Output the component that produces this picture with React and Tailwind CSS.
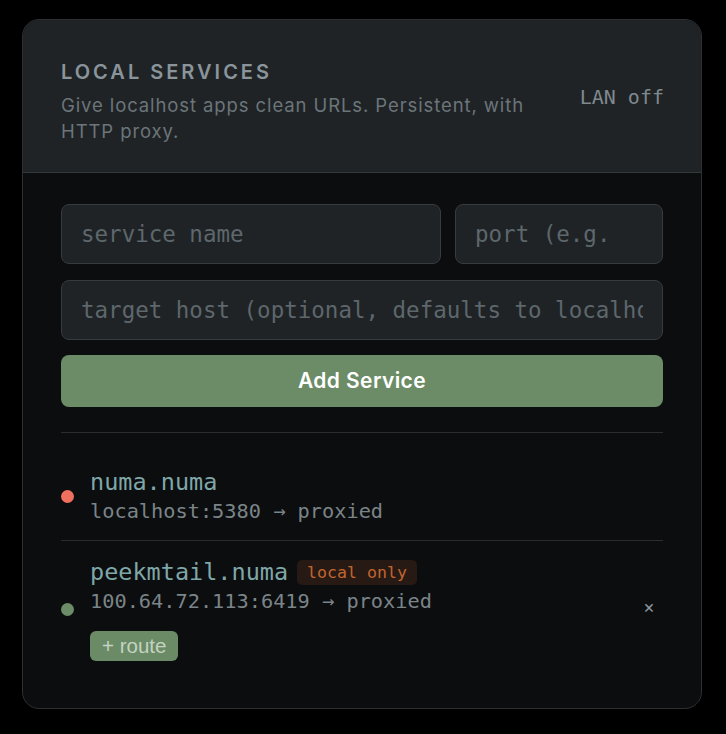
import React from "react";

const mono = "font-['DejaVu_Sans_Mono',monospace]";
const sans = "font-['Inter',sans-serif]";
const inputCls = `${mono} h-[60px] min-w-0 rounded-[8px] border border-[#363b3f] bg-[#1f2326] px-[19px] text-[22.5px] text-[#9aa3a8] outline-none placeholder:text-[#5d676c]`;

export default function App() {
  return (
    <div className="min-h-[734px] w-full bg-black pt-[19px] pl-[22px] pr-[24px] pb-[25px]">
      <div className="w-[680px] overflow-hidden rounded-[17px] border border-[#2c3033] bg-[#0b0d0f]">
        <div className="flex items-center justify-between gap-10 border-b border-[#33383b] bg-[#1f2326] pl-[38px] pr-[37px] pt-[40px] pb-[28px]">
          <div className="flex-1">
            <div className={`${sans} text-[20px] font-semibold leading-[24px] tracking-[0.15em] text-[#8a959b]`}>
              LOCAL SERVICES
            </div>
            <div className={`${sans} mt-[8px] max-w-[480px] text-[18.5px] leading-[26px] tracking-[0.9px] text-[#6b757a]`}>
              Give localhost apps clean URLs. Persistent, with HTTP proxy.
            </div>
          </div>
          <div className={`${mono} mb-[10px] text-[20px] text-[#7f898e] whitespace-nowrap`}>LAN off</div>
        </div>

        <div className="px-[38px] pt-[31px] pb-[47px]">
          <div className="flex gap-[14px]">
            <input className={`${inputCls} w-[380px]`} placeholder="service name" />
            <input className={`${inputCls} flex-1`} placeholder="port (e.g." />
          </div>
          <input
            className={`${inputCls} mt-[16px] block w-full`}
            placeholder="target host (optional, defaults to localhost)"
          />
          <div className={`${sans} mt-[15px] flex h-[52px] items-center justify-center rounded-[8px] bg-[#6b8c66] text-[21px] font-semibold tracking-[0.4px] text-white`}>
            Add Service
          </div>

          <div className="mt-[25px] border-t border-[#2a2e31] pt-[18px]">
            <div className="flex items-center gap-[16px] border-b border-[#2a2e31] pt-[17px] pb-[16px]">
              <div className="h-[13px] w-[13px] shrink-0 rounded-full bg-[#f0705f]" />
              <div className="flex-1">
                <div className={`${mono} text-[23.5px] leading-[28px] text-[#7fa7a8]`}>numa.numa</div>
                <div className={`${mono} mt-[2px] text-[20.3px] leading-[26px] text-[#7b8488]`}>
                  localhost:5380 → proxied
                </div>
              </div>
            </div>
            <div className="flex items-center gap-[16px] pt-[17px]">
              <div className="h-[13px] w-[13px] shrink-0 rounded-full bg-[#6b8c66]" />
              <div className="flex-1">
                <div className="flex items-center gap-[9px]">
                  <span className={`${mono} text-[23.5px] leading-[28px] text-[#7fa7a8]`}>peekmtail.numa</span>
                  <span className={`${mono} rounded-[5px] bg-[#271a14] px-[10px] text-[16.6px] leading-[25px] text-[#c2652f]`}>
                    local only
                  </span>
                </div>
                <div className={`${mono} mt-[2px] text-[20.3px] leading-[26px] text-[#7b8488]`}>
                  100.64.72.113:6419 → proxied
                </div>
                <div className="mt-[17px] flex">
                  <div className="flex h-[30px] items-center rounded-[6px] bg-[#6b8b67] px-[12px] font-['Liberation_Sans',Arial,sans-serif] text-[20.5px] text-[#c4d3c1]">
                    + route
                  </div>
                </div>
              </div>
              <div className={`${sans} flex items-center pr-[8px] pb-[5px] text-[18px] leading-none text-[#8a949a]`}>×</div>
            </div>
          </div>
        </div>
      </div>
    </div>
  );
}
